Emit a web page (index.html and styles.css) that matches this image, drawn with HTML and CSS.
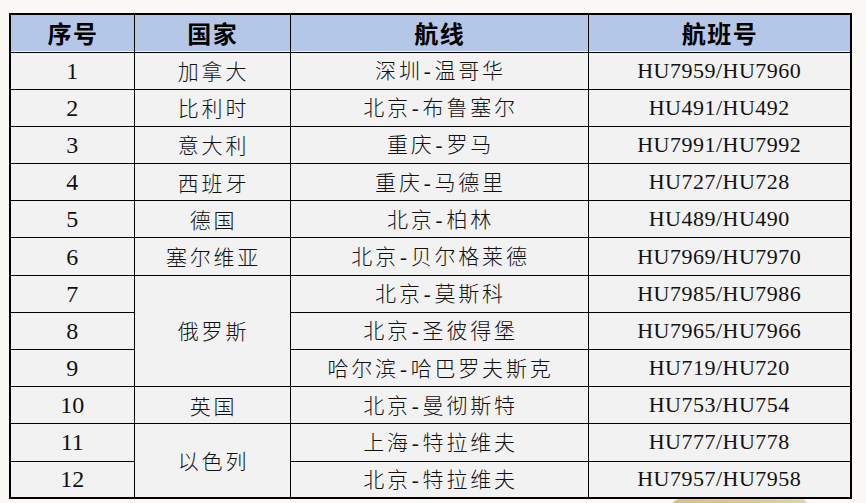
FILE: index.html
```html
<!DOCTYPE html>
<html lang="zh">
<head>
<meta charset="utf-8">
<title>航线</title>
<link rel="stylesheet" href="styles.css">
</head>
<body>
<div class="page">
<table class="flights">
  <colgroup>
    <col class="c1"><col class="c2"><col class="c3"><col class="c4">
  </colgroup>
  <thead>
    <tr><th>序号</th><th>国家</th><th>航线</th><th>航班号</th></tr>
  </thead>
  <tbody>
    <tr><td class="num">1</td><td class="cn">加拿大</td><td class="cn">深圳<span class="dash">-</span>温哥华</td><td class="fl">HU7959/HU7960</td></tr>
    <tr><td class="num">2</td><td class="cn">比利时</td><td class="cn">北京<span class="dash">-</span>布鲁塞尔</td><td class="fl">HU491/HU492</td></tr>
    <tr><td class="num">3</td><td class="cn">意大利</td><td class="cn">重庆<span class="dash">-</span>罗马</td><td class="fl">HU7991/HU7992</td></tr>
    <tr><td class="num">4</td><td class="cn">西班牙</td><td class="cn">重庆<span class="dash">-</span>马德里</td><td class="fl">HU727/HU728</td></tr>
    <tr><td class="num">5</td><td class="cn">德国</td><td class="cn">北京<span class="dash">-</span>柏林</td><td class="fl">HU489/HU490</td></tr>
    <tr><td class="num">6</td><td class="cn">塞尔维亚</td><td class="cn">北京<span class="dash">-</span>贝尔格莱德</td><td class="fl">HU7969/HU7970</td></tr>
    <tr><td class="num">7</td><td class="cn" rowspan="3">俄罗斯</td><td class="cn">北京<span class="dash">-</span>莫斯科</td><td class="fl">HU7985/HU7986</td></tr>
    <tr><td class="num">8</td><td class="cn">北京<span class="dash">-</span>圣彼得堡</td><td class="fl">HU7965/HU7966</td></tr>
    <tr><td class="num">9</td><td class="cn">哈尔滨<span class="dash">-</span>哈巴罗夫斯克</td><td class="fl">HU719/HU720</td></tr>
    <tr><td class="num">10</td><td class="cn">英国</td><td class="cn">北京<span class="dash">-</span>曼彻斯特</td><td class="fl">HU753/HU754</td></tr>
    <tr><td class="num">11</td><td class="cn" rowspan="2">以色列</td><td class="cn">上海<span class="dash">-</span>特拉维夫</td><td class="fl">HU777/HU778</td></tr>
    <tr><td class="num">12</td><td class="cn">北京<span class="dash">-</span>特拉维夫</td><td class="fl">HU7957/HU7958</td></tr>
  </tbody>
</table>
<div class="deco"></div>
</div>
</body>
</html>
```
FILE: styles.css
```css
html, body {
  margin: 0;
  padding: 0;
  background: #f9f8f4;
}
body {
  width: 866px;
  height: 503px;
  overflow: hidden;
}
.page {
  padding: 13px 0 0 9px;
}
.flights {
  border-collapse: collapse;
  width: 841px;
  table-layout: fixed;
  border: 2px solid #000;
  color: #111;
}
.c1 { width: 124px; }
.c2 { width: 156px; }
.c3 { width: 298px; }
.c4 { width: 263px; }

.flights th,
.flights td {
  border: 1px solid #000;
  padding: 0;
  text-align: center;
  vertical-align: middle;
  background: #f2f2f2;
}
.flights thead tr { height: 38px; }
.flights tbody tr { height: 37.2px; }
.flights th {
  background: #b4c7e7;
  box-shadow: inset 0 -1px 0 #eef1f7;
  font-family: "Noto Sans CJK SC", sans-serif;
  font-weight: 700;
  font-size: 24px;
  letter-spacing: 1.5px;
  padding-left: 1.5px;
  color: #000;
  line-height: 1;
}
.num {
  font-family: "Liberation Serif", serif;
  font-size: 24px;
  line-height: 1;
}
.cn {
  font-family: "Noto Sans CJK SC", sans-serif;
  font-weight: 300;
  font-size: 21px;
  letter-spacing: 2.8px;
  padding-left: 3px !important;
  line-height: 1;
}
.dash {
  font-family: "Liberation Serif", serif;
  font-weight: 400;
  display: inline-block;
  padding: 0 1px;
}
.fl {
  font-family: "Liberation Serif", serif;
  font-size: 22px;
  letter-spacing: 0.5px;
  line-height: 1;
}
.deco {
  margin-left: 657px;
  width: 146px;
  height: 8px;
  background: linear-gradient(90deg, #d6bd85, #dcc795 60%, #e3d3a8);
  clip-path: polygon(8% 0, 94% 0, 100% 100%, 0 100%);
}
```
